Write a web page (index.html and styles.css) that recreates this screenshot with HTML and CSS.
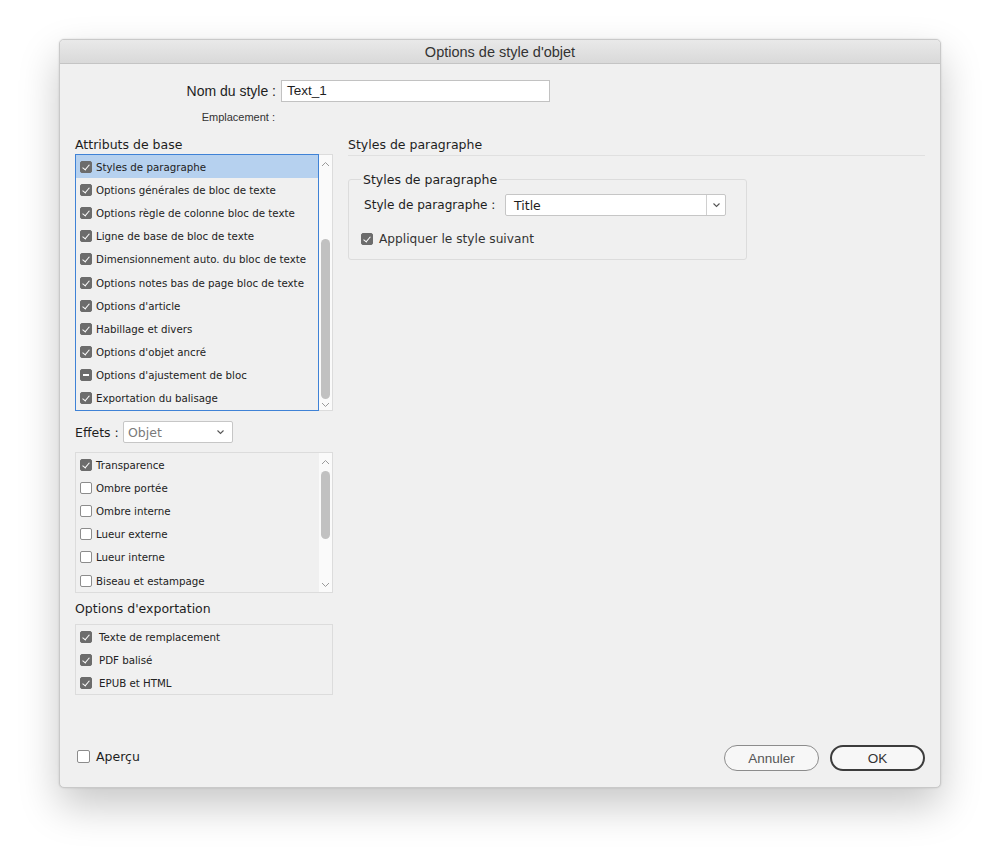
FILE: index.html
```html
<!DOCTYPE html>
<html lang="fr">
<head>
  <meta charset="UTF-8" />
  <title>Options de style d'objet</title>
  <link rel="stylesheet" href="styles.css">
</head>
<body>
  <div class="dialog">
    <div class="titlebar">Options de style d'objet</div>

    <div class="content">
      <div class="name-row">
        <label class="name-label">Nom du style :</label>
        <div class="text-input">Text_1</div>
      </div>
      <div class="place-row">Emplacement :</div>

      <div class="columns">
        <!-- left column -->
        <div class="left">
          <div class="heading">Attributs de base</div>
          <div class="listbox base">
            <ul class="items focus">
              <li class="selected"><span class="cb on"></span>Styles de paragraphe</li>
              <li><span class="cb on"></span>Options générales de bloc de texte</li>
              <li><span class="cb on"></span>Options règle de colonne bloc de texte</li>
              <li><span class="cb on"></span>Ligne de base de bloc de texte</li>
              <li><span class="cb on"></span>Dimensionnement auto. du bloc de texte</li>
              <li><span class="cb on"></span>Options notes bas de page bloc de texte</li>
              <li><span class="cb on"></span>Options d'article</li>
              <li><span class="cb on"></span>Habillage et divers</li>
              <li><span class="cb on"></span>Options d'objet ancré</li>
              <li><span class="cb mixed"></span>Options d'ajustement de bloc</li>
              <li><span class="cb on"></span>Exportation du balisage</li>
            </ul>
            <div class="scrollbar">
              <svg class="arrow up" width="9" height="6" viewBox="0 0 9 6"><path d="M1 5 L4.5 1.5 L8 5" fill="none" stroke="#9a9a9a" stroke-width="1"/></svg>
              <div class="track"><div class="thumb thumb-base"></div></div>
              <svg class="arrow down" width="9" height="6" viewBox="0 0 9 6"><path d="M1 1 L4.5 4.5 L8 1" fill="none" stroke="#9a9a9a" stroke-width="1"/></svg>
            </div>
          </div>

          <div class="effects-row">
            <span class="effects-label">Effets :</span>
            <div class="select small">
              <span class="value muted">Objet</span>
              <svg width="9" height="6" viewBox="0 0 9 6"><path d="M1.5 1.5 L4.5 4.5 L7.5 1.5" fill="none" stroke="#555" stroke-width="1.1"/></svg>
            </div>
          </div>
          <div class="listbox effects">
            <ul class="items">
              <li><span class="cb on"></span>Transparence</li>
              <li><span class="cb"></span>Ombre portée</li>
              <li><span class="cb"></span>Ombre interne</li>
              <li><span class="cb"></span>Lueur externe</li>
              <li><span class="cb"></span>Lueur interne</li>
              <li><span class="cb"></span>Biseau et estampage</li>
            </ul>
            <div class="scrollbar">
              <svg class="arrow up" width="9" height="6" viewBox="0 0 9 6"><path d="M1 5 L4.5 1.5 L8 5" fill="none" stroke="#9a9a9a" stroke-width="1"/></svg>
              <div class="track"><div class="thumb thumb-effects"></div></div>
              <svg class="arrow down" width="9" height="6" viewBox="0 0 9 6"><path d="M1 1 L4.5 4.5 L8 1" fill="none" stroke="#9a9a9a" stroke-width="1"/></svg>
            </div>
          </div>

          <div class="heading export-heading">Options d'exportation</div>
          <div class="listbox export">
            <ul class="items">
              <li><span class="cb on"></span>Texte de remplacement</li>
              <li><span class="cb on"></span>PDF balisé</li>
              <li><span class="cb on"></span>EPUB et HTML</li>
            </ul>
          </div>
        </div>

        <!-- right column -->
        <div class="right">
          <div class="section-title">Styles de paragraphe</div>
          <fieldset class="group">
            <legend>Styles de paragraphe</legend>
            <div class="para-row">
              <span class="para-label">Style de paragraphe :</span>
              <div class="select wide">
                <span class="value">Title</span>
                <span class="drop">
                  <svg width="9" height="6" viewBox="0 0 9 6"><path d="M1.5 1.5 L4.5 4.5 L7.5 1.5" fill="none" stroke="#555" stroke-width="1.1"/></svg>
                </span>
              </div>
            </div>
            <div class="apply-row"><span class="cb on"></span>Appliquer le style suivant</div>
          </fieldset>
        </div>
      </div>

      <div class="footer">
        <div class="preview"><span class="cb big"></span>Aperçu</div>
        <div class="buttons">
          <button class="btn">Annuler</button>
          <button class="btn default">OK</button>
        </div>
      </div>
    </div>
  </div>
</body>
</html>
```

FILE: styles.css
```css
* { box-sizing: border-box; }
html, body { height: 100%; }
body {
  margin: 0;
  background: #ffffff;
  font-family: 'Liberation Sans', Arial, sans-serif;
  color: #1e1e1e;
  padding-top: 39px;
}
.dialog {
  margin: 0 0 0 59px;
  width: 882px;
  height: 749px;
  background: #f0f0f0;
  border: 1px solid #c9c9c9;
  border-radius: 5px;
  box-shadow: 0 18px 40px rgba(0,0,0,0.22), 0 0 2px rgba(0,0,0,0.15);
  display: flex;
  flex-direction: column;
  overflow: hidden;
}
.titlebar {
  height: 24px;
  line-height: 25px;
  text-align: center;
  font-size: 14.5px;
  color: #333;
  background: linear-gradient(#e9e9e9, #d9d9d9);
  border-bottom: 1px solid #c4c4c4;
  flex: none;
}
.content {
  flex: 1;
  display: flex;
  flex-direction: column;
  padding: 16px 15px 16px 15px;
}
.name-row {
  display: flex;
  align-items: center;
  height: 22px;
}
.name-label {
  width: 206px;
  text-align: right;
  font-size: 14px;
  padding-right: 5px;
}
.text-input {
  width: 269px;
  height: 22px;
  background: #fff;
  border: 1px solid #c2c2c2;
  font-size: 13.5px;
  line-height: 20px;
  padding-left: 5px;
}
.place-row {
  margin-top: 8px;
  width: 200px;
  text-align: right;
  font-size: 11px;
  color: #333;
  height: 14px;
  line-height: 14px;
}
.columns {
  display: flex;
  gap: 15px;
  margin-top: 13px;
}
.left { width: 258px; }
.right { flex: 1; }
.heading {
  font-family: 'DejaVu Sans', sans-serif;
  font-size: 12.5px;
  height: 16px;
  line-height: 16px;
  margin-bottom: 1px;
}
.listbox {
  display: flex;
  border: 1px solid #dcdcdc;
  background: #f0f0f0;
}
.listbox.base { height: 257px; }
.listbox.effects { height: 141px; margin-top: 9px; }
.listbox.export { height: 71px; margin-top: 7px; }
.items {
  list-style: none;
  margin: 0;
  padding: 0;
  flex: 1;
  overflow: hidden;
}
.items.focus {
  border: 1px solid #3f82d6;
  margin: -1px 0 -1px -1px;
}
.items li {
  height: 23.2px;
  display: flex;
  align-items: center;
  font-family: 'DejaVu Sans', sans-serif;
  font-size: 10.25px;
  padding-left: 4px;
  white-space: nowrap;
  color: #222;
}
.items.focus li { padding-left: 4px; }
.items li.selected { background: #b6d1ef; }
.export .items li .cb { margin-right: 7px; }
.cb {
  display: inline-block;
  width: 12px;
  height: 12px;
  border: 1px solid #8c8c8c;
  border-radius: 2px;
  background: #fff;
  margin-right: 4px;
  position: relative;
  flex: none;
}
.cb.on, .cb.mixed {
  background: #6c6c6c;
  border-color: #6c6c6c;
}
.cb.on::after {
  content: "";
  position: absolute;
  left: 3px;
  top: 1px;
  width: 3px;
  height: 6px;
  border: solid #fff;
  border-width: 0 1.6px 1.6px 0;
  transform: rotate(40deg);
}
.cb.mixed::after {
  content: "";
  position: absolute;
  left: 2px;
  top: 4px;
  width: 6px;
  height: 2px;
  background: #fff;
}
.scrollbar {
  width: 13px;
  flex: none;
  background: #fafafa;
  display: flex;
  flex-direction: column;
  align-items: center;
}
.scrollbar .arrow { flex: none; margin: 6px 0 4px; }
.scrollbar .arrow.down { margin: 3px 0 4px; }
.track { flex: 1; width: 100%; position: relative; }
.thumb {
  width: 9px;
  margin: 0 auto;
  background: #c1c1c1;
  border-radius: 5px;
}
.thumb-base { margin-top: 68px; height: 160px; }
.thumb-effects { margin-top: 2px; height: 68px; }
.effects-row {
  display: flex;
  align-items: center;
  margin-top: 10px;
  height: 22px;
}
.effects-label {
  font-family: 'DejaVu Sans', sans-serif;
  font-size: 12.5px;
  width: 48px;
}
.select {
  height: 22px;
  background: #fff;
  border: 1px solid #c6c6c6;
  border-radius: 2px;
  display: flex;
  align-items: center;
  font-family: 'DejaVu Sans', sans-serif;
  font-size: 12.5px;
}
.select.small {
  width: 110px;
  justify-content: space-between;
  padding: 0 7px 0 4px;
}
.value.muted { color: #7a7a7a; }
.export-heading { margin-top: 8px; }
.section-title {
  font-family: 'DejaVu Sans', sans-serif;
  font-size: 12.5px;
  height: 16px;
  line-height: 16px;
  padding-bottom: 2px;
  border-bottom: 1px solid #e0e0e0;
  box-sizing: content-box;
}
.group {
  margin: 16px 0 0 0;
  width: 399px;
  height: 88px;
  border: 1px solid #dcdcdc;
  border-radius: 3px;
  padding: 7px 12px 0 15px;
}
.group legend {
  font-family: 'DejaVu Sans', sans-serif;
  font-size: 12.5px;
  padding: 0 2px;
  margin-left: -3px;
}
.para-row {
  display: flex;
  align-items: center;
  height: 22px;
}
.para-label {
  font-family: 'DejaVu Sans', sans-serif;
  font-size: 12.1px;
  width: 141px;
}
.select.wide {
  width: 221px;
  padding-left: 8px;
}
.select.wide .value { flex: 1; }
.select .drop {
  width: 19px;
  height: 100%;
  border-left: 1px solid #d0d0d0;
  display: flex;
  align-items: center;
  justify-content: center;
}
.apply-row {
  display: flex;
  align-items: center;
  margin-top: 16px;
  margin-left: -3px;
  font-family: 'DejaVu Sans', sans-serif;
  font-size: 12.2px;
  color: #333;
}
.apply-row .cb { margin-right: 6px; }
.footer {
  margin-top: auto;
  display: flex;
  align-items: center;
  justify-content: space-between;
  height: 26px;
}
.preview {
  display: flex;
  align-items: center;
  font-family: 'DejaVu Sans', sans-serif;
  font-size: 12.5px;
  margin-left: 2px;
  margin-top: -3px;
}
.cb.big { width: 13px; height: 13px; margin-right: 6px; }
.buttons { display: flex; gap: 11px; }
.btn {
  width: 95px;
  height: 26px;
  border-radius: 13px;
  background: #f7f7f7;
  border: 1px solid #8c8c8c;
  font-family: 'Liberation Sans', Arial, sans-serif;
  font-size: 13.5px;
  color: #555;
  padding: 0;
}
.btn.default {
  border: 2px solid #3c3c3c;
  color: #333;
}
```
